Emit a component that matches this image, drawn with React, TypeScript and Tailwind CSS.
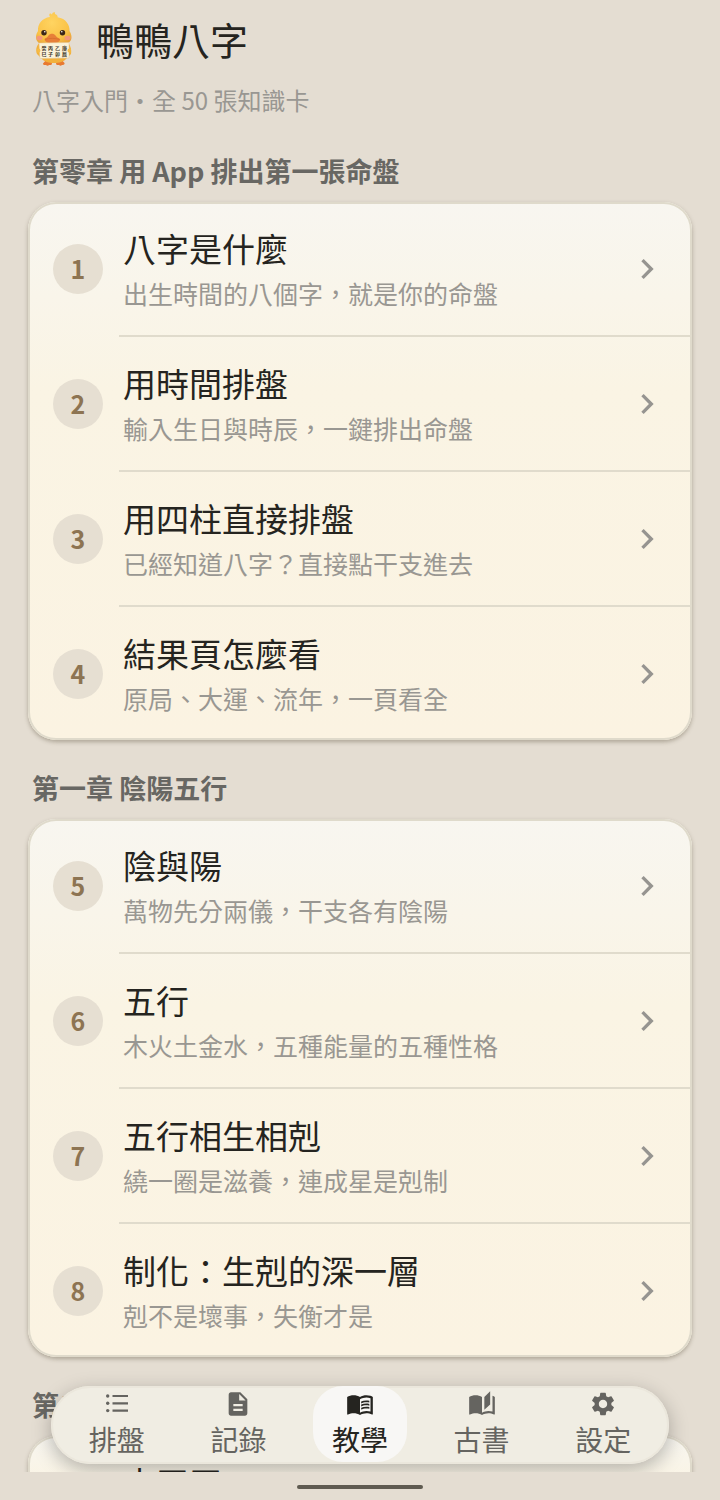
import {
  MdAutoStories,
  MdChevronRight,
  MdDescription,
  MdMenuBook,
  MdSettings,
} from "react-icons/md";

const chapters = [
  {
    title: "第零章 用 App 排出第一張命盤",
    cards: [
      { id: 1, title: "八字是什麼", desc: "出生時間的八個字，就是你的命盤" },
      { id: 2, title: "用時間排盤", desc: "輸入生日與時辰，一鍵排出命盤" },
      { id: 3, title: "用四柱直接排盤", desc: "已經知道八字？直接點干支進去" },
      { id: 4, title: "結果頁怎麼看", desc: "原局、大運、流年，一頁看全" },
    ],
  },
  {
    title: "第一章 陰陽五行",
    cards: [
      { id: 5, title: "陰與陽", desc: "萬物先分兩儀，干支各有陰陽" },
      { id: 6, title: "五行", desc: "木火土金水，五種能量的五種性格" },
      { id: 7, title: "五行相生相剋", desc: "繞一圈是滋養，連成星是剋制" },
      { id: 8, title: "制化：生剋的深一層", desc: "剋不是壞事，失衡才是" },
    ],
  },
  {
    title: "第二章 干支",
    cards: [{ id: 9, title: "十天干", desc: "" }],
  },
];

const ListIcon = ({ className }: { className?: string }) => (
  <svg viewBox="0 0 28 28" className={className} fill="currentColor" aria-hidden="true">
    <circle cx="4.7" cy="6" r="1.700" />
    <circle cx="4.7" cy="13.300" r="1.700" />
    <circle cx="4.7" cy="20.600" r="1.700" />
    <path d="M9.500 4.900H25v2.200H9.500zM9.500 12.200H25v2.200H9.500zM9.500 19.500H25v2.200H9.500z" />
  </svg>
);

const tabs = [
  { label: "排盤", icon: ListIcon },
  { label: "記錄", icon: MdDescription },
  { label: "教學", icon: MdMenuBook, active: true },
  { label: "古書", icon: MdAutoStories },
  { label: "設定", icon: MdSettings },
];

const Duck = () => (
  <svg viewBox="0 0 42 56" className="w-11 h-14" aria-hidden="true">
    <defs>
      <radialGradient id="feather" cx="0.45" cy="0.3" r="0.7">
        <stop offset="0" stopColor="#ffd461" />
        <stop offset="0.7" stopColor="#fac247" />
        <stop offset="1" stopColor="#eaa437" />
      </radialGradient>
    </defs>
    {/* feet */}
    <path
      d="M14 48l-4 4.5c0 2 2 1.400 3 1.500 1 1 2.500.8 3 0 1.500.3 3 0 3-1.500L18 48zM24 48l-1 4.500c0 1.500 1.500 1.800 3 1.500 1 .8 2 1 3 0 1.500 0 3-.5 2.500-2L28 48z"
      fill="#e87a32"
    />
    {/* body, head and tuft */}
    <path
      d="M9 30C4 33 2 38 4 43l4 4c3 4 8 5 13 5s10-1 13-5l4-4c1-5-1-10-5-13z"
      fill="#f2b13c"
    />
    <path
      d="M17 6c-1-1.500-1-3 0-3.500 1 0 1.500.5 2 1 .3-1.500 1.500-2.500 3-2-.3.8 0 1.300.5 1.800C24 4 25 5 24.500 6.200 33 7.500 37 14 36.500 20c2 3 2.500 6.500 1.500 9-3 5-9 7-17 7S6 34 3.500 29C2.500 26 3 23 5 20 4.500 13 9 7 17 6z"
      fill="url(#feather)"
    />
    <ellipse cx="6.500" cy="27" rx="3" ry="2.200" fill="#f4987c" />
    <ellipse cx="34.500" cy="27" rx="3" ry="2.200" fill="#f4987c" />
    <circle cx="11" cy="21.700" r="2.700" fill="#3d2718" />
    <circle cx="29.500" cy="21.700" r="2.700" fill="#3d2718" />
    <circle cx="11.800" cy="20.700" r="0.800" fill="#fff" />
    <circle cx="28.800" cy="20.700" r="0.800" fill="#fff" />
    <path
      d="M11.500 28c1-1 3-1.500 4-3.500 1.500-2.500 5.500-2.500 7 0 1 2 3.500 2.500 4.500 3.500.5 2-2 3.500-4 4h-7c-2.500-.5-4.500-2-4.500-4z"
      fill="#e77f38"
    />
    <path d="M12 28.500c4-1.500 10.500-1.500 14.500 0" fill="none" stroke="#d2662a" strokeWidth="0.600" />
    {/* sign */}
    <path d="M6 32l30-.5V47L7 47.500z" fill="#fbf2d8" stroke="#e3c794" strokeWidth="0.500" />
    <g fontSize="5" fontWeight="700" fill="#3f372b">
      <text x="8.500 15 22 29" y="38.500">癸丙乙庚</text>
      <text x="8.500 15 22 29" y="45">巳子卯辰</text>
    </g>
    <path
      d="M4 38c1.500-1 3.500 0 3.500 1.500S6 42 4.500 42zM38 38c-1.500-1-3.500 0-3.500 1.500S36 42 37.500 42z"
      fill="#f6bb45"
    />
  </svg>
);

const Chapter = ({ title, cards }: (typeof chapters)[number]) => (
  <section className="pb-7">
    <h2 className="px-1 mb-[11px] text-[27px] leading-10 font-bold text-[#686763]">
      {title}
    </h2>
    <ul className="relative rounded-[28px] overflow-hidden bg-linear-to-b from-[#f8f6f0] via-[#faf4e4] via-35% to-[#fbf3e2] inset-ring-2 inset-ring-[#dfdacb] shadow-[0_2px_4px_rgba(90,80,60,0.4)]">
      {cards.map((card, i) => (
        <li key={card.id}>
          {i > 0 && <hr className="ml-[91px] border-t-2 border-[#e0dbcc]" />}
          <a href={`#card-${card.id}`} className="flex items-center h-[133px] px-[25px]">
            <span className="flex items-center justify-center shrink-0 size-[50px] rounded-full bg-[#e6dfd2] text-[25px] font-bold text-[#8d7452]">
              {card.id}
            </span>
            <span className="flex-1 min-w-0 pl-5 pb-[2px]">
              <span className="block text-[33px] leading-[50px] text-[#252420]">
                {card.title}
              </span>
              <span className="block h-10 text-[25px] leading-10 text-[#999792]">
                {card.desc}
              </span>
            </span>
            <MdChevronRight className="shrink-0 size-10 text-[#969490]" />
          </a>
        </li>
      ))}
    </ul>
  </section>
);

const TabBar = () => (
  <nav className="absolute inset-x-[51px] bottom-2 flex h-[78px] px-[5px] rounded-full bg-[#f0ede3] inset-ring-2 inset-ring-[#ebe7dc] shadow-[0_6px_20px_rgba(0,0,0,0.28)]">
    {tabs.map(({ label, icon: Icon, active }) => (
      <a
        key={label}
        href={`#${label}`}
        aria-current={active ? "page" : undefined}
        className={
          active
            ? "flex-1 flex justify-center text-[#252420]"
            : "flex-1 flex justify-center text-[#656460]"
        }
      >
        <span
          className={
            active
              ? "flex flex-col items-center w-[94px] h-[76px] pt-1 rounded-[30px] bg-[#f8f7f5]"
              : "flex flex-col items-center w-[94px] h-[76px] pt-1"
          }
        >
          <Icon className="size-7" />
          <span className="text-[28px] leading-[42px]">{label}</span>
        </span>
      </a>
    ))}
  </nav>
);

const App = () => (
  <div
    lang="zh-Hant"
    className="flex flex-col h-screen bg-[#e4ddd2] font-['Noto_Sans_CJK_TC',sans-serif]"
  >
    <div className="relative flex-1 min-h-0 overflow-hidden">
      <main className="h-full px-7 pt-[11px] overflow-y-auto [scrollbar-width:none]">
        <header className="px-1 pb-[33px]">
          <div className="flex items-center gap-5">
            <Duck />
            <h1 className="text-[38px] leading-[56px] text-[#252420]">鴨鴨八字</h1>
          </div>
          <p className="mt-[15px] text-2xl leading-9 text-[#999792]">
            八字入門・全 50 張知識卡
          </p>
        </header>
        {chapters.map((chapter) => (
          <Chapter key={chapter.title} {...chapter} />
        ))}
      </main>
      <TabBar />
    </div>
    <footer className="flex items-center justify-center shrink-0 h-7 pt-[2px]">
      <div className="w-[126px] h-1 rounded-full bg-[#5f5b51]" />
    </footer>
  </div>
);

export default App;
